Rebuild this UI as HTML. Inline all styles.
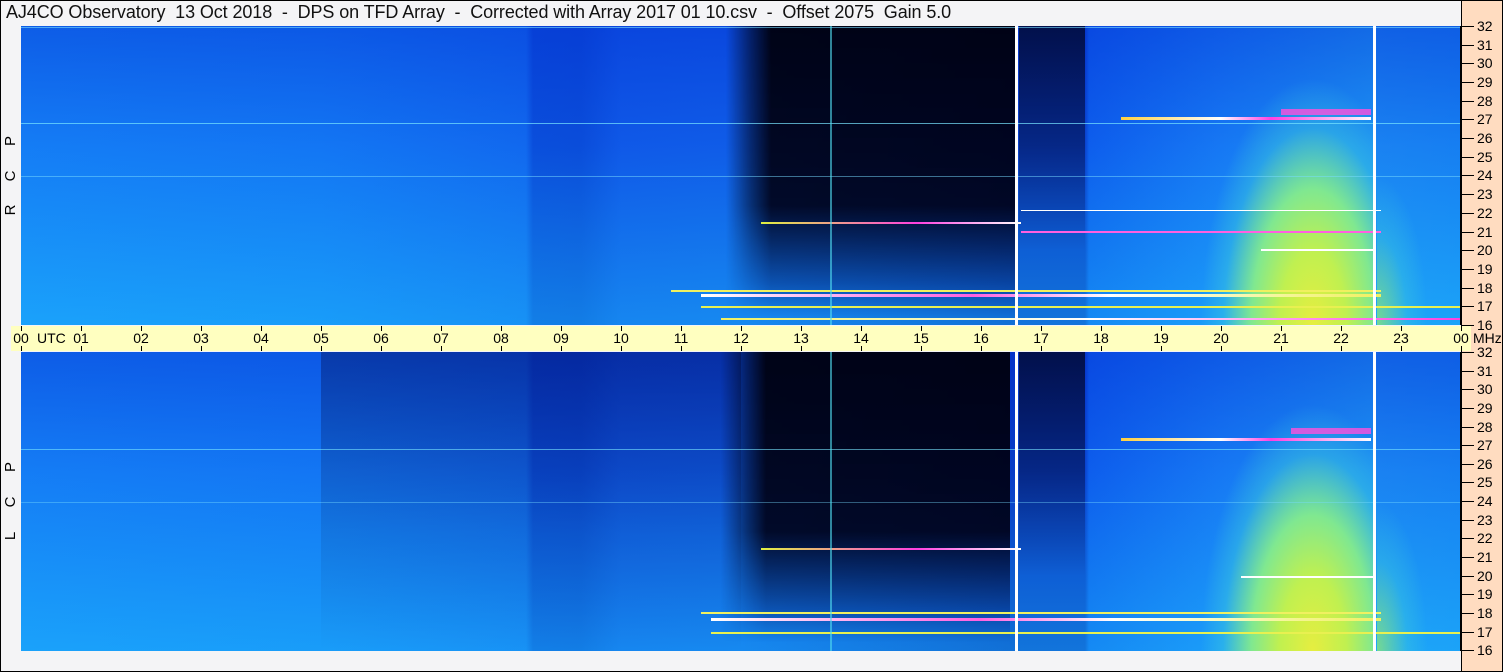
<!DOCTYPE html>
<html><head><meta charset="utf-8"><style>
*{margin:0;padding:0;box-sizing:border-box}
body{width:1503px;height:672px;overflow:hidden;background:#f4f4f6;font-family:"Liberation Sans",sans-serif;position:relative}
#frame{position:absolute;left:0;top:0;width:1503px;height:672px;border:1px solid #000;z-index:50;pointer-events:none}
.title{position:absolute;left:6px;top:2px;font-size:18px;white-space:pre;color:#111;letter-spacing:-0.1px}
.peach{position:absolute;left:1461px;top:0;width:42px;height:672px;background:#ffdcc0;border-left:1px solid #000}
.panel{position:absolute;left:21px;width:1440px;overflow:hidden;border-right:1px solid #000}
.base{position:absolute;inset:0;background:
linear-gradient(to bottom,rgba(0,40,210,.45) 0%,rgba(0,60,230,.15) 40%,rgba(30,210,255,.35) 100%),
linear-gradient(to right,#1888f8 0,#1680f6 300px,#1470f0 505px,#0c52da 512px,#0c50d8 560px,#125ee8 600px,#1262e8 720px,#0a3cc0 994px,#0b42c8 998px,#0b42c8 1064px,#1064ee 1068px,#1a82f6 1200px,#22a0f6 1352px,#1e8ef4 1356px,#1a8af4 1440px)}
.dark{position:absolute;left:705px;width:289px;top:0;bottom:0;background:linear-gradient(to bottom,rgba(0,0,12,.95) 0%,rgba(0,0,20,.9) 60%,rgba(0,20,90,.4) 86%,rgba(0,0,0,0) 97%);-webkit-mask-image:linear-gradient(to right,transparent 0,rgba(0,0,0,.6) 25px,#000 45px,#000 100%)}
.dark2{position:absolute;left:998px;width:66px;top:0;bottom:0;background:linear-gradient(to bottom,rgba(0,0,20,.7) 0%,rgba(0,0,30,.4) 40%,rgba(0,0,0,0) 75%)}
.blob{position:absolute;left:1180px;width:172px;top:40px;bottom:0;background:radial-gradient(ellipse 65% 95% at 65% 100%,#e6ee40 0%,#c0f050 30%,#80e890 55%,rgba(60,200,220,.45) 80%,rgba(0,0,0,0) 100%)}
.blob2{position:absolute;left:1356px;width:84px;top:150px;bottom:0;background:radial-gradient(ellipse 60% 100% at 0% 100%,rgba(140,230,120,.8) 0%,rgba(60,200,220,.4) 60%,rgba(0,0,0,0) 100%)}
.wl{position:absolute;top:0;bottom:0;width:3px;background:#fff}
.ln{position:absolute;height:1px}
.ax{position:absolute;left:1461px;width:13px;height:1px;background:#000;z-index:20}
.ml{position:absolute;left:1477px;font-size:14px;line-height:16px;height:16px;color:#000;z-index:20}
.band{position:absolute;left:11px;top:326px;width:1460px;height:25px;background:#ffffc0;z-index:30}
.tk{position:absolute;width:1px;height:5px;background:#000}
.tl{position:absolute;top:4px;font-size:14px;line-height:16px;width:30px;margin-left:-15px;text-align:center}
.side{position:absolute;left:3px;font-size:15px;transform:rotate(-90deg);width:16px;text-align:center;line-height:16px}
</style></head><body>
<div class="title">AJ4CO Observatory  13 Oct 2018  -  DPS on TFD Array  -  Corrected with Array 2017 01 10.csv  -  Offset 2075  Gain 5.0</div>
<div class="peach"></div>

<div class="panel" style="top:26px;height:299px">
<div class="base"></div><div class="dark"></div><div class="dark2"></div><div class="blob"></div><div class="blob2"></div>
<div class="ln" style="top:1px;left:0;width:1440px;background:rgba(120,220,255,.6)"></div>
<div class="ln" style="top:97px;left:0;width:1440px;background:rgba(120,230,255,.7)"></div>
<div class="ln" style="top:150px;left:0;width:1440px;background:rgba(120,220,255,.5)"></div>
<div class="ln" style="top:91px;left:1100px;width:250px;height:3px;background:linear-gradient(to right,#ffd040,#fff 40%,#ff40e0 60%,#fff)"></div>
<div class="ln" style="top:83px;left:1260px;width:90px;height:6px;background:rgba(255,80,220,.8)"></div>
<div class="ln" style="top:196px;left:740px;width:260px;height:2px;background:linear-gradient(to right,#e0f040,#ff40e0 60%,#fff)"></div>
<div class="ln" style="top:264px;left:650px;width:710px;height:2px;background:#f0f060"></div>
<div class="ln" style="top:268px;left:680px;width:680px;height:3px;background:linear-gradient(to right,#fff,#ff60e0 40%,#fff 60%,#f0f060)"></div>
<div class="ln" style="top:280px;left:680px;width:760px;height:2px;background:#e8f050"></div>
<div class="ln" style="top:292px;left:700px;width:740px;height:2px;background:linear-gradient(to right,#f0f060,#fff 50%,#ff40e0)"></div>
<div class="ln" style="top:205px;left:1000px;width:360px;height:2px;background:#ff60e0"></div>
<div class="ln" style="top:184px;left:1000px;width:360px;height:1px;background:#fff"></div>
<div class="ln" style="top:223px;left:1240px;width:115px;height:2px;background:#fff"></div>
<div class="ln" style="top:0;left:809px;width:2px;height:299px;background:rgba(80,220,240,.6)"></div>
<div class="wl" style="left:994px"></div><div class="wl" style="left:1352px"></div>
</div>

<div class="panel" style="top:352px;height:299px">
<div class="base"></div>
<div style="position:absolute;left:300px;width:420px;top:0;bottom:0;background:linear-gradient(to bottom,rgba(0,0,60,.35),rgba(0,0,40,.1) 60%,rgba(0,0,0,0))"></div>
<div class="dark" style="left:700px"></div><div class="dark2"></div><div class="blob"></div><div class="blob2"></div>
<div class="ln" style="top:97px;left:0;width:1440px;background:rgba(120,230,255,.6)"></div>
<div class="ln" style="top:150px;left:0;width:1440px;background:rgba(120,220,255,.4)"></div>
<div class="ln" style="top:86px;left:1100px;width:250px;height:3px;background:linear-gradient(to right,#ffd040,#fff 40%,#ff40e0 60%,#fff)"></div>
<div class="ln" style="top:76px;left:1270px;width:80px;height:6px;background:rgba(255,80,220,.8)"></div>
<div class="ln" style="top:196px;left:740px;width:260px;height:2px;background:linear-gradient(to right,#e0f040,#ff40e0 60%,#fff)"></div>
<div class="ln" style="top:260px;left:680px;width:680px;height:2px;background:#f0f060"></div>
<div class="ln" style="top:266px;left:690px;width:670px;height:3px;background:linear-gradient(to right,#fff,#ff60e0 40%,#fff 60%,#f0f060)"></div>
<div class="ln" style="top:280px;left:690px;width:750px;height:2px;background:#e8f050"></div>
<div class="ln" style="top:224px;left:1220px;width:135px;height:2px;background:#fff"></div>
<div class="ln" style="top:0;left:809px;width:2px;height:299px;background:rgba(80,220,240,.6)"></div>
<div class="wl" style="left:994px"></div><div class="wl" style="left:1352px"></div>
</div>

<div class="side" style="top:133px">P</div>
<div class="side" style="top:168px">C</div>
<div class="side" style="top:202px">R</div>
<div class="side" style="top:459px">P</div>
<div class="side" style="top:494px">C</div>
<div class="side" style="top:528px">L</div>

<div class="band">
<div class="tk" style="left:10px;top:0"></div><div class="tk" style="left:10px;top:20px"></div>
<div class="tl" style="left:10px;width:20px;margin-left:-10px">00</div><div class="tl" style="left:26px;width:40px;margin-left:0;text-align:left">UTC</div>
<div class="tk" style="left:70px;top:0"></div><div class="tk" style="left:70px;top:20px"></div><div class="tl" style="left:70px">01</div>
<div class="tk" style="left:130px;top:0"></div><div class="tk" style="left:130px;top:20px"></div><div class="tl" style="left:130px">02</div>
<div class="tk" style="left:190px;top:0"></div><div class="tk" style="left:190px;top:20px"></div><div class="tl" style="left:190px">03</div>
<div class="tk" style="left:250px;top:0"></div><div class="tk" style="left:250px;top:20px"></div><div class="tl" style="left:250px">04</div>
<div class="tk" style="left:310px;top:0"></div><div class="tk" style="left:310px;top:20px"></div><div class="tl" style="left:310px">05</div>
<div class="tk" style="left:370px;top:0"></div><div class="tk" style="left:370px;top:20px"></div><div class="tl" style="left:370px">06</div>
<div class="tk" style="left:430px;top:0"></div><div class="tk" style="left:430px;top:20px"></div><div class="tl" style="left:430px">07</div>
<div class="tk" style="left:490px;top:0"></div><div class="tk" style="left:490px;top:20px"></div><div class="tl" style="left:490px">08</div>
<div class="tk" style="left:550px;top:0"></div><div class="tk" style="left:550px;top:20px"></div><div class="tl" style="left:550px">09</div>
<div class="tk" style="left:610px;top:0"></div><div class="tk" style="left:610px;top:20px"></div><div class="tl" style="left:610px">10</div>
<div class="tk" style="left:670px;top:0"></div><div class="tk" style="left:670px;top:20px"></div><div class="tl" style="left:670px">11</div>
<div class="tk" style="left:730px;top:0"></div><div class="tk" style="left:730px;top:20px"></div><div class="tl" style="left:730px">12</div>
<div class="tk" style="left:790px;top:0"></div><div class="tk" style="left:790px;top:20px"></div><div class="tl" style="left:790px">13</div>
<div class="tk" style="left:850px;top:0"></div><div class="tk" style="left:850px;top:20px"></div><div class="tl" style="left:850px">14</div>
<div class="tk" style="left:910px;top:0"></div><div class="tk" style="left:910px;top:20px"></div><div class="tl" style="left:910px">15</div>
<div class="tk" style="left:970px;top:0"></div><div class="tk" style="left:970px;top:20px"></div><div class="tl" style="left:970px">16</div>
<div class="tk" style="left:1030px;top:0"></div><div class="tk" style="left:1030px;top:20px"></div><div class="tl" style="left:1030px">17</div>
<div class="tk" style="left:1090px;top:0"></div><div class="tk" style="left:1090px;top:20px"></div><div class="tl" style="left:1090px">18</div>
<div class="tk" style="left:1150px;top:0"></div><div class="tk" style="left:1150px;top:20px"></div><div class="tl" style="left:1150px">19</div>
<div class="tk" style="left:1210px;top:0"></div><div class="tk" style="left:1210px;top:20px"></div><div class="tl" style="left:1210px">20</div>
<div class="tk" style="left:1270px;top:0"></div><div class="tk" style="left:1270px;top:20px"></div><div class="tl" style="left:1270px">21</div>
<div class="tk" style="left:1330px;top:0"></div><div class="tk" style="left:1330px;top:20px"></div><div class="tl" style="left:1330px">22</div>
<div class="tk" style="left:1390px;top:0"></div><div class="tk" style="left:1390px;top:20px"></div><div class="tl" style="left:1390px">23</div>
<div class="tk" style="left:1450px;top:0"></div><div class="tk" style="left:1450px;top:20px"></div><div class="tl" style="left:1450px;width:20px;margin-left:-10px">00</div>
</div>
<div style="position:absolute;left:1473px;top:330px;font-size:14px;line-height:16px;z-index:31">MHz</div>

<div class="ax" style="top:26px"></div><div class="ml" style="top:18px">32</div>
<div class="ax" style="top:45px"></div><div class="ml" style="top:37px">31</div>
<div class="ax" style="top:63px"></div><div class="ml" style="top:55px">30</div>
<div class="ax" style="top:82px"></div><div class="ml" style="top:74px">29</div>
<div class="ax" style="top:101px"></div><div class="ml" style="top:93px">28</div>
<div class="ax" style="top:119px"></div><div class="ml" style="top:111px">27</div>
<div class="ax" style="top:138px"></div><div class="ml" style="top:130px">26</div>
<div class="ax" style="top:157px"></div><div class="ml" style="top:149px">25</div>
<div class="ax" style="top:175px"></div><div class="ml" style="top:167px">24</div>
<div class="ax" style="top:194px"></div><div class="ml" style="top:186px">23</div>
<div class="ax" style="top:213px"></div><div class="ml" style="top:205px">22</div>
<div class="ax" style="top:232px"></div><div class="ml" style="top:224px">21</div>
<div class="ax" style="top:250px"></div><div class="ml" style="top:242px">20</div>
<div class="ax" style="top:269px"></div><div class="ml" style="top:261px">19</div>
<div class="ax" style="top:288px"></div><div class="ml" style="top:280px">18</div>
<div class="ax" style="top:306px"></div><div class="ml" style="top:298px">17</div>
<div class="ax" style="top:325px"></div><div class="ml" style="top:317px">16</div>

<div class="ax" style="top:352px"></div><div class="ml" style="top:344px">32</div>
<div class="ax" style="top:371px"></div><div class="ml" style="top:363px">31</div>
<div class="ax" style="top:389px"></div><div class="ml" style="top:381px">30</div>
<div class="ax" style="top:408px"></div><div class="ml" style="top:400px">29</div>
<div class="ax" style="top:427px"></div><div class="ml" style="top:419px">28</div>
<div class="ax" style="top:445px"></div><div class="ml" style="top:437px">27</div>
<div class="ax" style="top:464px"></div><div class="ml" style="top:456px">26</div>
<div class="ax" style="top:482px"></div><div class="ml" style="top:474px">25</div>
<div class="ax" style="top:501px"></div><div class="ml" style="top:493px">24</div>
<div class="ax" style="top:520px"></div><div class="ml" style="top:512px">23</div>
<div class="ax" style="top:538px"></div><div class="ml" style="top:530px">22</div>
<div class="ax" style="top:557px"></div><div class="ml" style="top:549px">21</div>
<div class="ax" style="top:576px"></div><div class="ml" style="top:568px">20</div>
<div class="ax" style="top:594px"></div><div class="ml" style="top:586px">19</div>
<div class="ax" style="top:613px"></div><div class="ml" style="top:605px">18</div>
<div class="ax" style="top:632px"></div><div class="ml" style="top:624px">17</div>
<div class="ax" style="top:650px"></div><div class="ml" style="top:642px">16</div>
<div id="frame"></div>
</body></html>
